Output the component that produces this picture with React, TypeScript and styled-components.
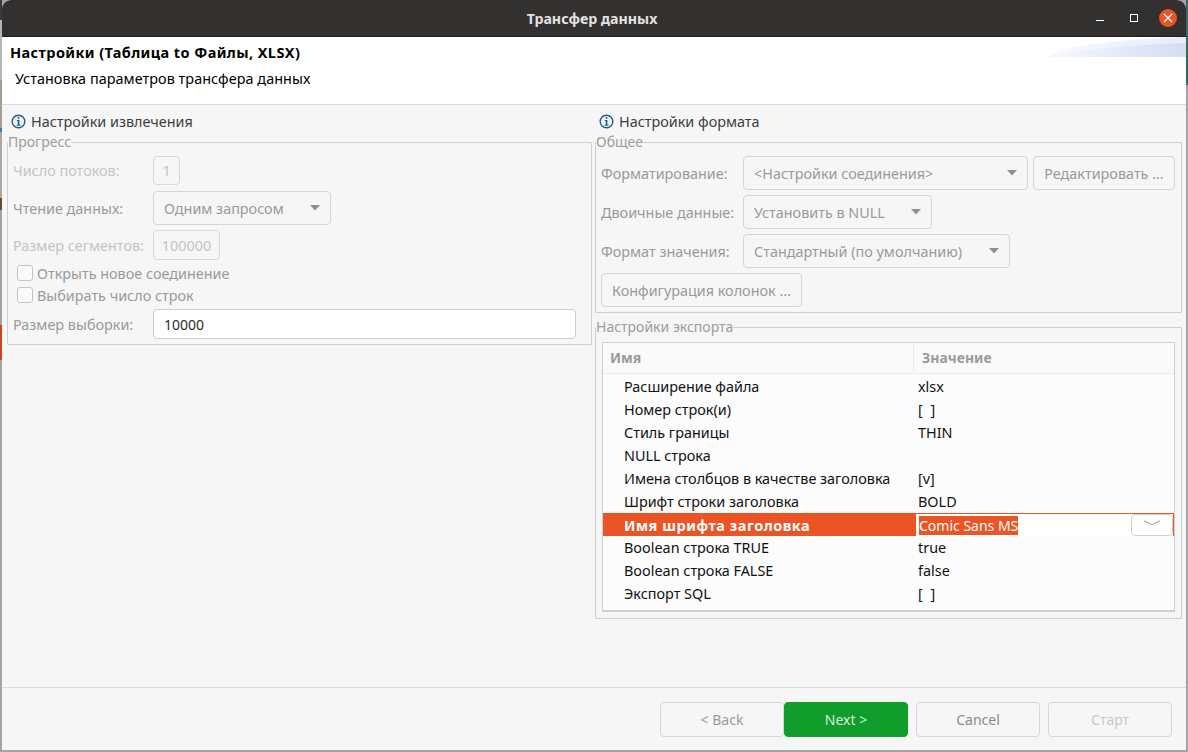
import React from 'react';
import styled, { createGlobalStyle } from 'styled-components';

const FONT = '"Noto Sans", "Open Sans", sans-serif';

const rows = [
  ['Расширение файла', 'xlsx'],
  ['Номер строк(и)', '[ ]'],
  ['Стиль границы', 'THIN'],
  ['NULL строка', ''],
  ['Имена столбцов в качестве заголовка', '[v]'],
  ['Шрифт строки заголовка', 'BOLD'],
  ['Имя шрифта заголовка', 'Comic Sans MS'],
  ['Boolean строка TRUE', 'true'],
  ['Boolean строка FALSE', 'false'],
  ['Экспорт SQL', '[ ]'],
  ['', '[ ]'],
];

const SELECTED = 6;

const InfoIcon = () => (
  <svg width="15" height="15" viewBox="0 0 15 15" fill="none">
    <circle cx="7.5" cy="7.5" r="6.3" stroke="#1a5c96" strokeWidth="1.4" />
    <rect x="6.7" y="3.1" width="1.7" height="1.7" fill="#1a5c96" />
    <path d="M5.8 6h2.6v4.7h1.1v1H5.6v-1h1.1V7H5.8z" fill="#1a5c96" />
  </svg>
);

const Caret = () => (
  <svg width="10" height="6" viewBox="0 0 10 6">
    <path d="M0 0h10L5 5.5z" fill="#8f8f8f" />
  </svg>
);

export default function App() {
  return (
    <>
      <GlobalStyle />
      <Desktop>
        <Window>
          <TitleBar>
            <Title>Трансфер данных</Title>
            <WindowControls>
              <MinimizeBtn />
              <MaximizeBtn />
              <CloseBtn>
                <svg width="10" height="10" viewBox="0 0 10 10">
                  <path d="M1 1l8 8M9 1l-8 8" stroke="#fff" strokeWidth="1.4" />
                </svg>
              </CloseBtn>
            </WindowControls>
          </TitleBar>

          <Banner>
            <BannerTitle>Настройки (Таблица to Файлы, XLSX)</BannerTitle>
            <BannerSub>Установка параметров трансфера данных</BannerSub>
            <BannerArt viewBox="0 0 140 20" preserveAspectRatio="none">
              <defs>
                <linearGradient id="swoosh" x1="0" x2="1" y1="0" y2="0">
                  <stop offset="0" stopColor="#f8fafe" />
                  <stop offset="1" stopColor="#e6ecf9" />
                </linearGradient>
                <linearGradient id="swooshDeep" x1="0" x2="1" y1="0" y2="0">
                  <stop offset="0" stopColor="#f6f8fd" />
                  <stop offset="1" stopColor="#d3ddf3" />
                </linearGradient>
              </defs>
              <path d="M0 20C14 10 70 2 140 0V20z" fill="url(#swoosh)" />
              <path d="M4 20C30 13 80 8 140 6V20z" fill="url(#swooshDeep)" />
            </BannerArt>
          </Banner>

          <Body>
            <LeftColumn>
              <SectionHead>
                <InfoIcon />
                <span>Настройки извлечения</span>
              </SectionHead>
              <Group>
                <Legend>Прогресс</Legend>
                <ProgressRows>
                  <FormRow $top={3}>
                    <Label $faint>Число потоков:</Label>
                    <Field $width={27} $height={29}>1</Field>
                  </FormRow>
                  <FormRow $top={6}>
                    <Label>Чтение данных:</Label>
                    <Combo $width={178}>
                      Одним запросом
                      <Caret />
                    </Combo>
                  </FormRow>
                  <FormRow $top={5}>
                    <Label $faint>Размер сегментов:</Label>
                    <Field $width={67} $height={30}>100000</Field>
                  </FormRow>
                  <CheckRow $top={5}>
                    <CheckBox />
                    Открыть новое соединение
                  </CheckRow>
                  <CheckRow $top={6}>
                    <CheckBox />
                    Выбирать число строк
                  </CheckRow>
                  <FormRow $top={6}>
                    <Label>Размер выборки:</Label>
                    <TextInput>10000</TextInput>
                  </FormRow>
                </ProgressRows>
              </Group>
            </LeftColumn>

            <RightColumn>
              <SectionHead>
                <InfoIcon />
                <span>Настройки формата</span>
              </SectionHead>
              <Group>
                <Legend>Общее</Legend>
                <GeneralRows>
                  <GeneralRow>
                    <GeneralLabel>Форматирование:</GeneralLabel>
                    <Combo $width={285}>
                      &lt;Настройки соединения&gt;
                      <Caret />
                    </Combo>
                    <PlainButton $width={142}>Редактировать ...</PlainButton>
                  </GeneralRow>
                  <GeneralRow>
                    <GeneralLabel>Двоичные данные:</GeneralLabel>
                    <Combo $width={189}>
                      Установить в NULL
                      <Caret />
                    </Combo>
                  </GeneralRow>
                  <GeneralRow>
                    <GeneralLabel>Формат значения:</GeneralLabel>
                    <Combo $width={267}>
                      Стандартный (по умолчанию)
                      <Caret />
                    </Combo>
                  </GeneralRow>
                  <GeneralRow>
                    <PlainButton $width={201}>Конфигурация колонок ...</PlainButton>
                  </GeneralRow>
                </GeneralRows>
              </Group>
              <ExportGroup>
                <Legend>Настройки экспорта</Legend>
                <PropTable>
                  <PropHead>
                    <NameHead>Имя</NameHead>
                    <ValueHead>Значение</ValueHead>
                  </PropHead>
                  <PropBody>
                    {rows.map(([name, value], i) =>
                      i === SELECTED ? (
                        <SelectedRow key={name}>
                          <SelectedName>{name}</SelectedName>
                          <Editor>
                            <Selection>{value}</Selection>
                            <EditorButton>
                              <svg width="18" height="6" viewBox="0 0 18 6" fill="none">
                                <path d="M1 .8L9 4.8L17 .8" stroke="#a0a0a0" strokeWidth="1" />
                              </svg>
                            </EditorButton>
                          </Editor>
                        </SelectedRow>
                      ) : (
                        <PropRow key={i}>
                          <PropName>{name}</PropName>
                          <PropValue>{value}</PropValue>
                        </PropRow>
                      ),
                    )}
                  </PropBody>
                </PropTable>
              </ExportGroup>
            </RightColumn>
          </Body>

          <Footer>
            <WizardButton $tone="muted">&lt; Back</WizardButton>
            <NextButton>Next &gt;</NextButton>
            <WizardButton $gap>Cancel</WizardButton>
            <WizardButton $gap $tone="off">Старт</WizardButton>
          </Footer>
        </Window>
      </Desktop>
    </>
  );
}

const GlobalStyle = createGlobalStyle`
  html, body {
    margin: 0;
    padding: 0;
    height: 100%;
    overflow: hidden;
    background: #a3a3a3;
  }
  * {
    box-sizing: border-box;
  }
  #root {
    height: 100%;
  }
`;

const Desktop = styled.div`
  width: 1188px;
  height: 752px;
  padding: 0 2px 2px;
  font-family: ${FONT};
  font-size: 14.4px;
  background:
    linear-gradient(#2f6d63 0 85px, #a3a3a3 85px) right top / 2px 100% no-repeat,
    linear-gradient(
      #3a3a3a 0 20px,
      #b5b5b5 20px 80px,
      #a89f94 80px 128px,
      #3d7fb0 128px 132px,
      #b0a89e 132px 198px,
      #6e4a2a 198px 210px,
      #a3a3a3 210px 325px,
      #c4491d 325px 360px,
      #a3a3a3 360px
    ) left top / 2px 100% no-repeat,
    #a3a3a3;
`;

const Window = styled.div`
  width: 100%;
  height: 100%;
  display: flex;
  flex-direction: column;
  background: #f6f6f6;
  border-radius: 9px 9px 0 0;
  overflow: hidden;
`;

const TitleBar = styled.div`
  position: relative;
  height: 37px;
  flex: none;
  display: flex;
  align-items: center;
  justify-content: center;
  background: #333030;
  border-bottom: 1px solid #1f1d1d;
`;

const Title = styled.div`
  color: #e4e2e0;
  font-weight: 700;
  font-size: 14.2px;
  margin-right: 4px;
`;

const WindowControls = styled.div`
  position: absolute;
  right: 9px;
  top: 9px;
  display: flex;
  align-items: center;
`;

const MinimizeBtn = styled.div`
  width: 8px;
  height: 1px;
  margin-top: 4px;
  background: #fff;
  margin-right: 26px;
`;

const MaximizeBtn = styled.div`
  width: 8px;
  height: 8px;
  border: 1px solid #fff;
  margin-right: 21px;
`;

const CloseBtn = styled.div`
  width: 18px;
  height: 18px;
  border-radius: 50%;
  background: #e95420;
  display: flex;
  align-items: center;
  justify-content: center;
`;

const Banner = styled.div`
  position: relative;
  height: 68px;
  flex: none;
  padding: 6px 8px 0;
  background: #fff;
  border-bottom: 1px solid #dcdcdc;
  color: #000;
`;

const BannerTitle = styled.div`
  font-weight: 700;
  font-size: 14.5px;
  letter-spacing: 0.4px;
  line-height: 19px;
`;

const BannerSub = styled.div`
  margin: 7px 0 0 5px;
  line-height: 19px;
  letter-spacing: 0.05px;
`;

const BannerArt = styled.svg`
  position: absolute;
  right: 0;
  top: 0;
  width: 140px;
  height: 20px;
`;

const Body = styled.div`
  flex: 1;
  display: flex;
  min-height: 0;
  border-bottom: 1px solid #dcdcdc;
`;

const LeftColumn = styled.div`
  width: 590px;
  flex: none;
  padding-left: 5px;
`;

const RightColumn = styled.div`
  width: 587px;
  flex: none;
  margin-left: 3px;
`;

const SectionHead = styled.div`
  height: 28px;
  display: flex;
  align-items: center;
  gap: 5px;
  padding: 5px 0 0 4px;
  color: #3d3d3d;
  svg {
    flex: none;
  }
`;

const Group = styled.fieldset`
  margin: 0;
  padding: 0;
  min-width: 0;
  border: 1px solid #cfcfcf;
  border-radius: 1px;
`;

const ExportGroup = styled(Group)`
  margin-top: 5px;
  height: 301px;
`;

const Legend = styled.legend`
  padding: 0;
  margin-left: 0;
  font-size: 14px;
  line-height: 18px;
  color: #9c9c9c;
`;

const ProgressRows = styled.div`
  padding: 2px 15px 5px 5px;
`;

const FormRow = styled.div<{ $top: number }>`
  display: flex;
  align-items: center;
  margin-top: ${(p) => p.$top}px;
`;

const Label = styled.div<{ $faint?: boolean }>`
  width: 140px;
  flex: none;
  color: ${(p) => (p.$faint ? '#c4c4c4' : '#9a9a9a')};
  white-space: nowrap;
`;

const Field = styled.div<{ $width: number; $height: number }>`
  width: ${(p) => p.$width}px;
  height: ${(p) => p.$height}px;
  display: flex;
  align-items: center;
  justify-content: center;
  border: 1px solid #d8d8d8;
  border-radius: 4px;
  color: #c4c4c4;
`;

const Combo = styled.div<{ $width: number }>`
  width: ${(p) => p.$width}px;
  height: 34px;
  flex: none;
  display: flex;
  align-items: center;
  justify-content: space-between;
  padding: 0 10px;
  border: 1px solid #d4d4d4;
  border-radius: 4px;
  background: #f6f6f6;
  color: #9a9a9a;
  white-space: nowrap;
`;

const CheckRow = styled.div<{ $top: number }>`
  display: flex;
  align-items: center;
  gap: 4px;
  height: 16px;
  margin: ${(p) => p.$top}px 0 0 4px;
  color: #9a9a9a;
  white-space: nowrap;
`;

const CheckBox = styled.div`
  width: 16px;
  height: 16px;
  border: 1px solid #c4c4c4;
  border-radius: 3px;
  background: #fbfbfb;
`;

const TextInput = styled.div`
  flex: 1;
  height: 30px;
  display: flex;
  align-items: center;
  padding: 0 10px;
  border: 1px solid #cfcfcf;
  border-radius: 4px;
  background: #fff;
  color: #2c2c2c;
  font-size: 14px;
`;

const GeneralRows = styled.div`
  display: flex;
  flex-direction: column;
  gap: 5px;
  padding: 5px 5px 5px;
`;

const GeneralRow = styled.div`
  display: flex;
  align-items: center;
  height: 34px;
`;

const GeneralLabel = styled.div`
  width: 142px;
  flex: none;
  color: #9a9a9a;
  white-space: nowrap;
`;

const PlainButton = styled.div<{ $width: number }>`
  width: ${(p) => p.$width}px;
  height: 34px;
  margin-left: 0;
  display: flex;
  align-items: center;
  justify-content: center;
  border: 1px solid #d4d4d4;
  border-radius: 4px;
  color: #9a9a9a;
  white-space: nowrap;
  ${Combo} + & {
    margin-left: 5px;
  }
`;

const PropTable = styled.div`
  margin: 6px 6px 0;
  height: 269px;
  display: flex;
  flex-direction: column;
  background: #fcfcfc;
  border: 1px solid #d0d0d0;
  box-shadow: 0 1px 0 #d0d0d0;
  overflow: hidden;
`;

const PropHead = styled.div`
  height: 31px;
  flex: none;
  display: flex;
  align-items: center;
  padding-bottom: 1px;
  background: #fafafa;
  border-bottom: 1px solid #ececec;
  color: #9a9a9a;
  font-weight: 700;
  font-size: 14px;
`;

const NameHead = styled.div`
  width: 310px;
  padding-left: 7px;
`;

const ValueHead = styled.div`
  flex: 1;
  height: 100%;
  display: flex;
  align-items: center;
  padding-left: 8px;
  border-left: 1px solid #ececec;
`;

const PropBody = styled.div`
  flex: 1;
  min-height: 0;
  overflow: hidden;
  padding-top: 1px;
`;

const PropRow = styled.div`
  display: flex;
  align-items: center;
  height: 23px;
  color: #111;
`;

const PropName = styled.div`
  width: 315px;
  flex: none;
  padding-left: 21px;
  white-space: nowrap;
`;

const PropValue = styled.div`
  white-space: pre;
  word-spacing: 4px;
`;

const SelectedRow = styled(PropRow)`
  background: #eb5424;
  margin-right: 0;
`;

const SelectedName = styled(PropName)`
  width: 313px;
  color: #fff;
  font-weight: 700;
  font-size: 14.5px;
  letter-spacing: 0.5px;
`;

const Editor = styled.div`
  flex: 1;
  align-self: stretch;
  margin: 1px 1px 0 0;
  padding-left: 3px;
  display: flex;
  align-items: center;
  justify-content: space-between;
  background: #fff;
`;

const Selection = styled.span`
  background: #eb5424;
  color: #fff;
  line-height: 19px;
  font-size: 14px;
`;

const EditorButton = styled.div`
  width: 42px;
  height: 22px;
  display: flex;
  align-items: flex-start;
  justify-content: center;
  padding-top: 5px;
  background: #fff;
  border: 1px solid #cfcfcf;
  border-radius: 4px;
`;

const Footer = styled.div`
  height: 62px;
  flex: none;
  display: flex;
  justify-content: flex-end;
  align-items: flex-start;
  padding: 14px 14px 0 0;
  font-size: 14px;
`;

const toneColor = { muted: '#9a9a9a', off: '#c9c9c9', normal: '#8a8a8a' };

const WizardButton = styled.div<{ $tone?: 'muted' | 'off'; $gap?: boolean }>`
  width: 124px;
  height: 35px;
  margin-left: ${(p) => (p.$gap ? '8px' : '0')};
  display: flex;
  align-items: center;
  justify-content: center;
  border: 1px solid #d6d6d6;
  border-radius: 4px;
  color: ${(p) => toneColor[p.$tone ?? 'normal']};
`;

const NextButton = styled(WizardButton)`
  background: #109d2b;
  border-color: #109d2b;
  color: #d5f0d9;
`;
